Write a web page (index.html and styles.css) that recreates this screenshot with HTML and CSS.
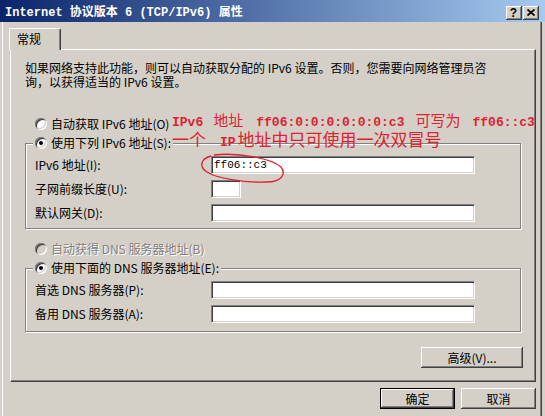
FILE: index.html
```html
<!DOCTYPE html>
<html lang="zh-CN">
<head>
<meta charset="utf-8">
<title>Internet 协议版本 6 (TCP/IPv6) 属性</title>
<link rel="stylesheet" href="styles.css">
</head>
<body>
<div class="win">
  <div class="titlebar">
    <span class="title">Internet 协议版本 6 (TCP/IPv6) 属性</span>
    <div class="caps">
      <span class="cap help">?</span>
      <span class="cap close"><svg width="8" height="7" viewBox="0 0 8 7"><path d="M0.5 0.5 L7.5 6.5 M7.5 0.5 L0.5 6.5" stroke="#000" stroke-width="1.7" fill="none"/></svg></span>
    </div>
  </div>
  <div class="content">
    <div class="tabs"><div class="tab">常规</div></div>
    <div class="panel">
      <p class="desc">如果网络支持此功能，则可以自动获取分配的 IPv6 设置。否则，您需要向网络管理员咨<br>询，以获得适当的 IPv6 设置。</p>
      <div class="opt first"><span class="radio"></span>自动获取 IPv6 地址(O)</div>
      <div class="group g1">
        <div class="legend"><span class="radio on"></span>使用下列 IPv6 地址(S):</div>
        <div class="row"><span class="lbl">IPv6 地址(I):</span><div class="field wide"><span class="val">ff06::c3</span></div></div>
        <div class="row"><span class="lbl">子网前缀长度(U):</span><div class="field short"></div></div>
        <div class="row"><span class="lbl">默认网关(D):</span><div class="field wide"></div></div>
      </div>
      <div class="opt dns disabled"><span class="radio"></span>自动获得 DNS 服务器地址(B)</div>
      <div class="group g2">
        <div class="legend"><span class="radio on"></span>使用下面的 DNS 服务器地址(E):</div>
        <div class="row"><span class="lbl">首选 DNS 服务器(P):</span><div class="field wide"></div></div>
        <div class="row"><span class="lbl">备用 DNS 服务器(A):</span><div class="field wide"></div></div>
      </div>
      <div class="adv-row"><button class="btn adv">高级(V)...</button></div>
    </div>
    <div class="footer">
      <button class="btn def">确定</button>
      <button class="btn">取消</button>
    </div>
  </div>

  <div class="note">
    <div class="n1"><span class="en">IPv6</span><span class="cn m10">地址</span><span class="en m13">ff06:0:0:0:0:0:0:c3</span><span class="cn m11">可写为</span><span class="en m12">ff06::c3</span></div>
    <div class="n2"><span class="cn2">一个</span><span class="en m14">IP</span><span class="cn2 m2">地址中只可使用一次双冒号</span></div>
  </div>
  <svg class="ring" width="545" height="416" viewBox="0 0 545 416">
    <path d="M214 155 C240 152 272 159 281 167 C287 175 280 182 267 182 C244 183 216 178 207 172 C199 167 200 159 211 156" stroke="#e02030" stroke-width="1.3" fill="none"/>
  </svg>
</div>
</body>
</html>
```

FILE: styles.css
```css
* {
  box-sizing: border-box;
  margin: 0;
  padding: 0;
}

body {
  margin: 0;
  background: #d4d0c8;
  font-family: "Noto Sans CJK SC", "Liberation Sans", sans-serif;
  font-size: 12px;
  color: #000;
}

.win {
  position: relative;
  width: 545px;
  height: 416px;
  overflow: hidden;
  background: #d4d0c8;
  box-shadow: inset 2px 0 0 #d4d0c8, inset 3px 0 0 #fff,
    inset -3px 0 0 #d4d0c8, inset -4px 0 0 #404040, inset -5px 0 0 #808080;
}

/* title bar */
.titlebar {
  display: flex;
  align-items: center;
  justify-content: space-between;
  height: 22px;
  padding: 3px 6px 0 5px;
  background: linear-gradient(to right, #0a246a, #a6caf0);
}

.title {
  font-family: "Liberation Mono", "Noto Sans CJK SC", monospace;
  font-weight: bold;
  font-size: 12px;
  line-height: 14px;
  color: #fff;
  white-space: pre;
}

.caps {
  display: flex;
  gap: 1px;
}

.cap {
  display: flex;
  align-items: center;
  justify-content: center;
  width: 16px;
  height: 14px;
  background: #d4d0c8;
  box-shadow: inset -1px -1px 0 #404040, inset 1px 1px 0 #fff, inset -2px -2px 0 #808080;
}

.help {
  font-family: "Liberation Sans", sans-serif;
  font-weight: bold;
  font-size: 12px;
  line-height: 12px;
  padding-right: 1px;
}

.close svg {
  display: block;
}

/* content */
.content {
  padding: 6px 0 0 10px;
}

.tabs {
  display: flex;
  height: 21px;
}

.tab {
  position: relative;
  z-index: 1;
  margin-left: -1px;
  width: 52px;
  height: 22px;
  padding: 3px 0 0 7px;
  line-height: 14px;
  background: #d4d0c8;
  border-top: 1px solid #fff;
  border-left: 1px solid #fff;
  border-right: 1px solid #404040;
  border-radius: 2px 2px 0 0;
  box-shadow: inset -1px 0 0 #808080;
}

.panel {
  width: 526px;
  height: 333px;
  padding: 11px 12px 0 14px;
  border-top: 1px solid #fff;
  border-left: 1px solid #fff;
  border-right: 1px solid #404040;
  border-bottom: 1px solid #404040;
  box-shadow: inset -1px -1px 0 #808080;
}

.desc {
  line-height: 14px;
  white-space: nowrap;
}

.opt {
  display: flex;
  align-items: center;
  height: 14px;
  line-height: 14px;
  padding-left: 10px;
  white-space: nowrap;
}

.opt.first {
  margin-top: 28px;
}

.opt.dns {
  margin-top: 13px;
}

.disabled {
  color: #808080;
  text-shadow: 1px 1px 0 #fff;
}

.radio {
  position: relative;
  flex: none;
  width: 12px;
  height: 12px;
  margin-right: 4px;
  border-radius: 50%;
  background: #fff;
  box-shadow: inset 1px 1px 0 #808080, inset -1px -1px 0 #fff,
    inset 2px 2px 0 #404040, inset -2px -2px 0 #d4d0c8;
}

.disabled .radio {
  background: #d4d0c8;
}

.radio.on::after {
  content: "";
  position: absolute;
  left: 4px;
  top: 4px;
  width: 4px;
  height: 4px;
  border-radius: 50%;
  background: #000;
}

.group {
  position: relative;
  display: flex;
  flex-direction: column;
  gap: 6px;
  width: 496px;
  margin-top: 12px;
  padding: 12px 0 6px 9px;
  border: 1px solid #808080;
  box-shadow: inset 1px 1px 0 #fff, 1px 1px 0 #fff;
}

.group.g2 {
  padding-bottom: 8px;
}

.legend {
  position: absolute;
  top: -8px;
  left: 7px;
  display: flex;
  align-items: center;
  height: 14px;
  line-height: 14px;
  padding: 0 2px;
  background: #d4d0c8;
  white-space: nowrap;
}

.row {
  display: flex;
  align-items: center;
  height: 18px;
}

.lbl {
  width: 176px;
  line-height: 14px;
  white-space: nowrap;
}

.field {
  height: 18px;
  background: #fff;
  border: 1px solid;
  border-color: #808080 #fff #fff #808080;
  box-shadow: inset 1px 1px 0 #404040, inset -1px -1px 0 #d4d0c8;
  padding: 0 0 0 2px;
}

.field.wide {
  width: 264px;
}

.field.short {
  width: 30px;
}

.val {
  display: block;
  font-family: "Liberation Mono", monospace;
  font-size: 11px;
  line-height: 16px;
}

.adv-row {
  display: flex;
  justify-content: flex-end;
  margin-top: 15px;
}

.btn {
  font: inherit;
  color: #000;
  height: 21px;
  line-height: 19px;
  padding: 0;
  text-align: center;
  background: #d4d0c8;
  border: none;
  box-shadow: inset -1px -1px 0 #404040, inset 1px 1px 0 #fff, inset -2px -2px 0 #808080;
}

.btn.adv {
  width: 102px;
}

.footer {
  display: flex;
  justify-content: flex-end;
  gap: 6px;
  width: 526px;
  margin-top: 6px;
}

.footer .btn {
  width: 75px;
}

.btn.def {
  border: 1px solid #000;
}

/* red annotation */
.note {
  position: absolute;
  left: 172px;
  top: 111px;
  color: #e02030;
  white-space: nowrap;
}

.n1 {
  height: 18px;
  line-height: 17px;
}

.n2 {
  height: 19px;
  line-height: 19px;
}

.en {
  font-family: "Liberation Mono", monospace;
  font-weight: bold;
  font-size: 13px;
}

.cn {
  font-size: 15px;
}

.cn2 {
  font-size: 17px;
}

.m2 { margin-left: 2px; }
.m10 { margin-left: 10px; }
.m11 { margin-left: 11px; }
.m12 { margin-left: 12px; }
.m13 { margin-left: 13px; }
.m14 { margin-left: 14px; }

.ring {
  position: absolute;
  left: 0;
  top: 0;
  pointer-events: none;
}
```
